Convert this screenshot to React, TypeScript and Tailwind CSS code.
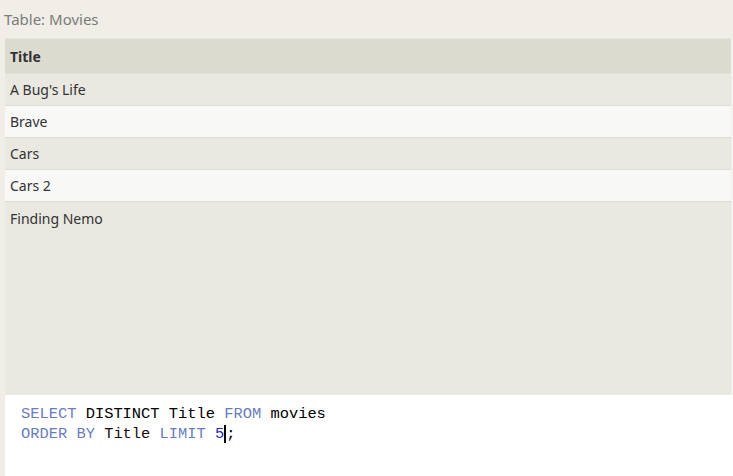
const movies = ["A Bug's Life", "Brave", "Cars", "Cars 2", "Finding Nemo"];

export default function App() {
  return (
    <div
      className="w-[733px] h-[476px] bg-[#f0eee7] flex flex-col overflow-hidden"
      style={{ fontFamily: '"Noto Sans", "Open Sans", sans-serif' }}
    >
      <div className="h-[38px] pl-[4px] pt-[9px] text-[15px] leading-[20px] text-[#7b7b7b]">Table: Movies</div>

      <div className="flex h-[357px] pl-[5px]">
        <div className="flex-1 flex flex-col bg-[#e9e8e1]">
          <div className="h-[36px] flex items-center px-[5px] bg-[#dbdbd0] border-t border-[#e6e5de] border-b border-b-[#e3e2da] text-[14px] font-bold text-[#333]">
            Title
          </div>
          {movies.map((m, i) => (
            <div
              key={m}
              className={
                "h-[32px] flex items-center px-[5px] text-[14px] text-[#333] " +
                (i < movies.length - 1 ? "border-b border-[#dcdcd5] " : "") +
                (i % 2 === 0 ? "bg-[#e9e8e1]" : "bg-[#f8f8f7]")
              }
            >
              {m}
            </div>
          ))}
        </div>
        <div className="w-[2px] bg-[#f3f2ef]" />
      </div>

      <div className="flex-1 ml-[5px] bg-white pl-[16px] pt-[9px] text-[15.4px] leading-[20px] whitespace-pre" style={{ fontFamily: '"Liberation Mono", monospace' }}>
        <div>
          <span className="text-[#6a7cc0]">SELECT</span> <span className="text-black">DISTINCT Title</span>{" "}
          <span className="text-[#6a7cc0]">FROM</span> <span className="text-black">movies</span>
        </div>
        <div>
          <span className="text-[#6a7cc0]">ORDER BY</span> <span className="text-[#1a0a0a]">Title</span>{" "}
          <span className="text-[#6a7cc0]">LIMIT</span> <span className="text-[#2a2ab8]">5</span>
          <span className="border-l-2 border-black">;</span>
        </div>
      </div>
    </div>
  );
}
